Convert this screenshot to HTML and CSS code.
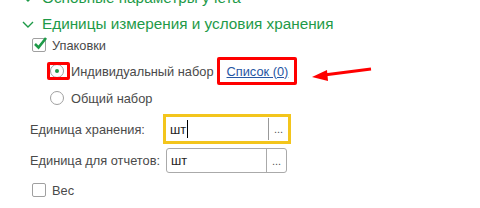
FILE: index.html
```html
<!DOCTYPE html>
<html lang="ru">
<head>
    <meta charset="UTF-8">
    <title>Единицы измерения</title>
    <link rel="stylesheet" href="styles.css">
</head>
<body>
    <div class="form">
        <div class="group-title">
            <svg class="chevron" width="12" height="7" viewBox="0 0 12 7"><polyline points="1,1 6,6 11,1"/></svg>
            <span>Основные параметры учета</span>
        </div>
        <div class="group-title">
            <svg class="chevron" width="12" height="7" viewBox="0 0 12 7"><polyline points="1,1 6,6 11,1"/></svg>
            <span>Единицы измерения и условия хранения</span>
        </div>

        <div class="check-row">
            <span class="checkbox">
                <svg width="16" height="16" viewBox="0 0 16 16"><polyline points="3,8 6.5,11.5 14,2"/></svg>
            </span>
            Упаковки
        </div>
        <div class="radio-row">
            <span class="radio checked"></span>
            Индивидуальный набор
            <a class="link" href="#">Список (0)</a>
        </div>
        <div class="radio-row">
            <span class="radio"></span>
            Общий набор
        </div>

        <div class="field-row first">
            <span class="field-label">Единица хранения:</span>
            <div class="field focused">
                <span class="value">шт<i class="caret"></i></span>
                <span class="pick">...</span>
            </div>
        </div>
        <div class="field-row second">
            <span class="field-label">Единица для отчетов:</span>
            <div class="field">
                <span class="value">шт</span>
                <span class="pick">...</span>
            </div>
        </div>

        <div class="check-row last">
            <span class="checkbox empty"></span>
            Вес
        </div>
    </div>

    <!-- annotations drawn over the form -->
    <div class="mark mark-radio"></div>
    <div class="mark mark-link"></div>
    <svg class="arrow" width="70" height="20" viewBox="0 0 70 20">
        <line x1="59" y1="3" x2="12" y2="9"/>
        <polygon points="0,11 15,4 16,15"/>
    </svg>
</body>
</html>
```

FILE: styles.css
```css
body { margin: 0; font-family: "Liberation Sans", Arial, sans-serif; font-size: 12.8px; color: #4a4a4a; background: #fff; position: relative; overflow: hidden; }
.form { margin-top: -15px; }

.group-title { display: flex; align-items: center; height: 26px; padding-left: 22px; gap: 8px; font-size: 15.3px; color: #1e9a48; white-space: nowrap; }
.chevron polyline { fill: none; stroke: #1e9a48; stroke-width: 1.4; }

.check-row { display: flex; align-items: center; height: 16px; padding-left: 32px; gap: 6px; }
.check-row.last { margin-top: 9px; }
.checkbox { width: 14px; height: 14px; box-sizing: border-box; border: 1px solid #a0a0a0; border-radius: 2px; position: relative; background: #fff; }
.checkbox svg { position: absolute; left: -1px; top: -3px; }
.checkbox polyline { fill: none; stroke: #1e9a48; stroke-width: 2.6; }

.radio-row { display: flex; align-items: center; height: 26px; padding-left: 50px; gap: 7px; }
.check-row + .radio-row { margin-top: 5px; }
.radio-row + .radio-row { margin-top: 1px; }
.radio { width: 14px; height: 14px; box-sizing: border-box; border: 1px solid #a0a0a0; border-radius: 50%; position: relative; background: #fff; }
.radio.checked::after { content: ""; position: absolute; left: 4px; top: 4px; width: 4px; height: 4px; border-radius: 50%; background: #1e9a48; }
.link { color: #2756a3; text-decoration: underline; margin-left: 6px; }

.field-row { display: grid; grid-template-columns: 136px 121px; align-items: center; padding-left: 30px; }
.field-row.first { margin-top: 3px; height: 24px; }
.field-row.second { margin-top: 10px; height: 25px; }
.field-label { white-space: nowrap; }
.field { display: flex; height: 25px; box-sizing: border-box; border: 1px solid #aaa; border-radius: 3px; background: #fff; color: #222; }
.field.focused { height: 30px; width: 128px; margin-left: -3px; border: 3px solid #f3c51c; border-radius: 0; }
.value { flex: 1; display: flex; align-items: center; padding-left: 4px; }
.caret { display: inline-block; width: 1px; height: 18px; background: #000; margin-left: 1px; }
.pick { width: 19px; border-left: 1px solid #aaa; display: flex; align-items: center; justify-content: center; font-size: 11px; color: #555; }
.field.focused .pick { border-left: 1px solid #999; margin: 1px 0; }

.mark { position: absolute; border: 3px solid #f00; border-radius: 2px; box-sizing: border-box; }
.mark-radio { left: 47px; top: 62px; width: 23px; height: 18px; }
.mark-link { left: 217px; top: 57px; width: 80px; height: 28px; }
.arrow { position: absolute; left: 312px; top: 66px; }
.arrow line { stroke: #f00; stroke-width: 3; }
.arrow polygon { fill: #f00; }
```
